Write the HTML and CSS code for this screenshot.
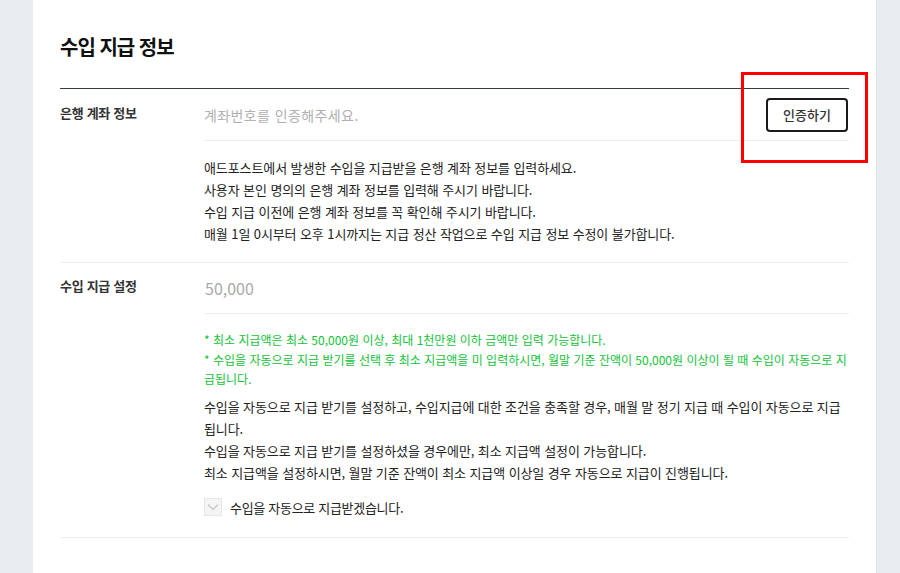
FILE: index.html
```html
<!DOCTYPE html>
<html lang="ko">
<head>
<meta charset="utf-8">
<title>수입 지급 정보</title>
<link rel="stylesheet" href="styles.css">
</head>
<body>
<div class="page">
  <section class="panel">
    <h2 class="title">수입 지급 정보</h2>
    <div class="form">
      <div class="row">
        <div class="label">은행 계좌 정보</div>
        <div class="field">
          <div class="input-line">
            <span class="placeholder">계좌번호를 인증해주세요.</span>
            <button class="btn" type="button">인증하기</button>
          </div>
          <div class="desc">
            <p>애드포스트에서 발생한 수입을 지급받을 은행 계좌 정보를 입력하세요.</p>
            <p>사용자 본인 명의의 은행 계좌 정보를 입력해 주시기 바랍니다.</p>
            <p>수입 지급 이전에 은행 계좌 정보를 꼭 확인해 주시기 바랍니다.</p>
            <p>매월 1일 0시부터 오후 1시까지는 지급 정산 작업으로 수입 지급 정보 수정이 불가합니다.</p>
          </div>
        </div>
      </div>
      <div class="row">
        <div class="label">수입 지급 설정</div>
        <div class="field">
          <div class="input-line">
            <span class="amount">50,000</span>
          </div>
          <div class="notes">
            <p>* 최소 지급액은 최소 50,000원 이상, 최대 1천만원 이하 금액만 입력 가능합니다.</p>
            <p>* 수입을 자동으로 지급 받기를 선택 후 최소 지급액을 미 입력하시면, 월말 기준 잔액이 50,000원 이상이 될 때 수입이 자동으로 지급됩니다.</p>
          </div>
          <div class="desc desc-second">
            <p>수입을 자동으로 지급 받기를 설정하고, 수입지급에 대한 조건을 충족할 경우, 매월 말 정기 지급 때 수입이 자동으로 지급됩니다.</p>
            <p>수입을 자동으로 지급 받기를 설정하셨을 경우에만, 최소 지급액 설정이 가능합니다.</p>
            <p>최소 지급액을 설정하시면, 월말 기준 잔액이 최소 지급액 이상일 경우 자동으로 지급이 진행됩니다.</p>
          </div>
          <label class="check">
            <span class="box"><svg width="12" height="8" viewBox="0 0 12 8"><path d="M1 1.5 L6 6.5 L11 1.5" fill="none" stroke="#c9c9c9" stroke-width="1.4"/></svg></span>
            <span class="check-text">수입을 자동으로 지급받겠습니다.</span>
          </label>
        </div>
      </div>
    </div>
    <div class="highlight"></div>
  </section>
</div>
</body>
</html>
```

FILE: styles.css
```css
* { box-sizing: border-box; }
html, body { margin: 0; padding: 0; }
body {
  background: #e9ecef;
  font-family: "Noto Sans CJK KR", "Noto Sans", sans-serif;
  color: #222;
  height: 573px;
  overflow: hidden;
}
p { margin: 0; }
.page { padding-left: 33px; }
.panel {
  position: relative;
  width: 844px;
  height: 573px;
  background: #fff;
  border-right: 1px solid #dde1e5;
  padding: 33px 27px 0 27px;
}
.title {
  margin: 0;
  font-size: 20px;
  line-height: 28px;
  font-weight: 700;
  letter-spacing: -1px;
  color: #111;
}
.form {
  margin-top: 27px;
  border-top: 1px solid #333d45;
}
.row {
  display: flex;
  border-bottom: 1px solid #eceeef;
}
.row:first-child { margin-bottom: -1px; }
.label {
  width: 144px;
  flex: none;
  padding-top: 15px;
  font-size: 13px;
  line-height: 18px;
  font-weight: 700;
  letter-spacing: -0.3px;
  color: #333;
}
.field { flex: 1; min-width: 0; }
.input-line {
  display: flex;
  align-items: center;
  justify-content: space-between;
  height: 52px;
  border-bottom: 1px solid #eceeef;
}
.placeholder {
  font-size: 14px;
  letter-spacing: 0.4px;
  color: #b0b0b0;
}
.amount {
  font-size: 16px;
  color: #aaa;
  padding-left: 1px;
}
.btn {
  width: 82px;
  height: 34px;
  margin-right: 1px;
  border: 2px solid #1a1a1a;
  border-radius: 4px;
  background: #fff;
  font-family: inherit;
  font-size: 13px;
  font-weight: 500;
  letter-spacing: 0;
  color: #333;
  padding: 0;
}
.desc {
  padding: 16px 0 17px;
  font-size: 13px;
  line-height: 22px;
  letter-spacing: -0.1px;
  color: #222;
}
.notes {
  padding-top: 16px;
  font-size: 12px;
  line-height: 19.5px;
  letter-spacing: 0;
  color: #12c339;
}
.desc-second { padding: 7px 0 0; line-height: 22px; }
.check {
  display: flex;
  align-items: center;
  gap: 8px;
  margin: 14px 0 20px;
}
.box {
  width: 18px;
  height: 18px;
  background: #f5f5f5;
  border: 1px solid #e6e6e6;
  display: flex;
  align-items: center;
  justify-content: center;
}
.check-text {
  font-size: 13px;
  letter-spacing: -0.3px;
  color: #222;
}
.highlight {
  position: absolute;
  left: 708px;
  top: 72px;
  width: 127px;
  height: 91px;
  border: 3px solid #ff0000;
}
```
